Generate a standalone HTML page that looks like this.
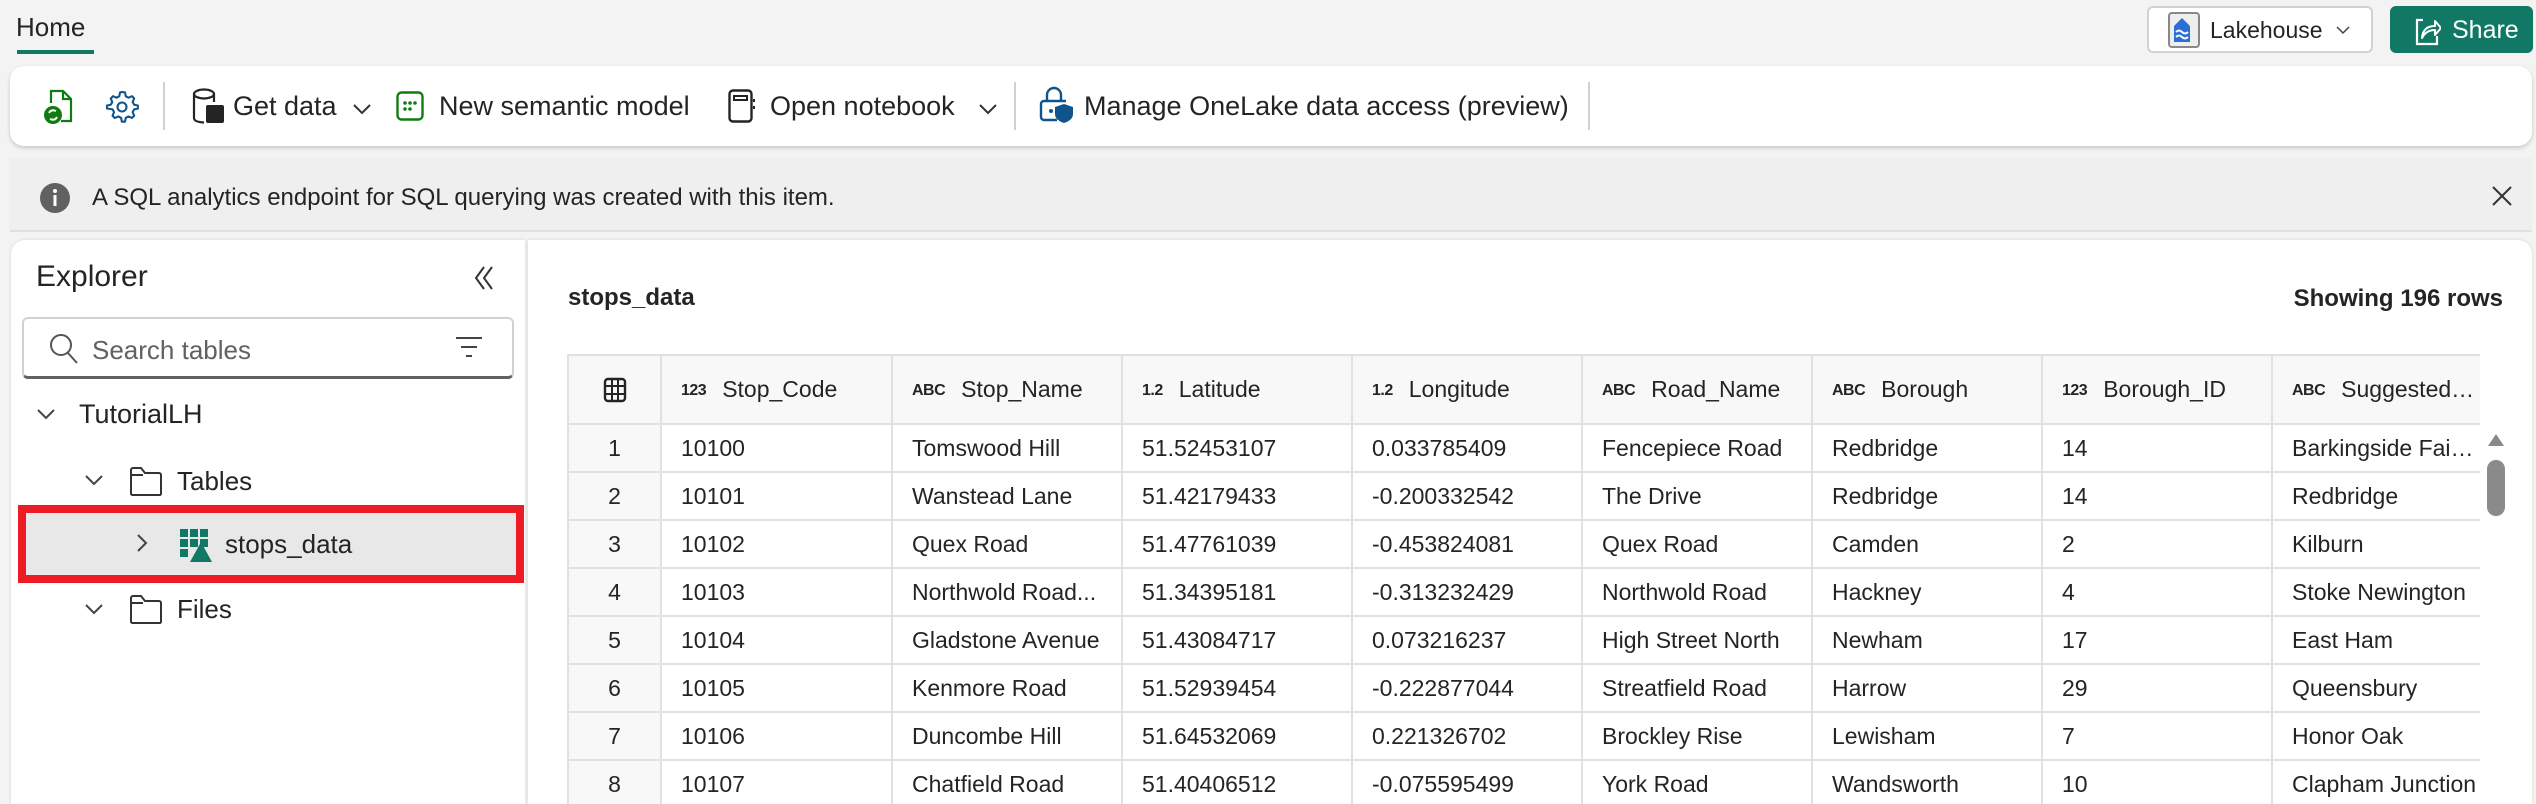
<!DOCTYPE html>
<html><head><meta charset="utf-8">
<style>
*{box-sizing:border-box;margin:0;padding:0}
html,body{width:2536px;height:804px;overflow:hidden}
body{background:#f3f3f3;font-family:"Liberation Sans",sans-serif;color:#242424;position:relative}
.a{position:absolute}
.t{position:absolute;white-space:nowrap;line-height:1}
.clip{position:absolute;left:567px;top:354px;width:1913px;height:450px;overflow:hidden}
table{border-collapse:collapse;table-layout:fixed;width:1913px}
td,th{border:2px solid #e1e1e1;font-size:23px;font-weight:normal;text-align:left;padding:0 0 0 19px;white-space:nowrap;overflow:hidden;text-overflow:ellipsis}
th{height:69px;background:#f8f8f8}
td{height:48px}
td.n,th.n{text-align:center;padding:0;background:#f8f8f8}
.ty{font-size:16px;font-weight:bold;margin-right:16px;letter-spacing:-0.5px;vertical-align:2px}
</style></head><body>
<div class="t" style="left:16px;top:14px;font-size:26px">Home</div>
<div class="a" style="left:17px;top:50px;width:77px;height:4px;background:#117865"></div>
<div class="a" style="left:2147px;top:6px;width:226px;height:47px;background:#fff;border:2px solid #d1d1d1;border-radius:6px"></div>
<svg class="a" style="left:2168px;top:12px" width="32" height="36" viewBox="0 0 32 36"><rect x="1" y="1" width="30" height="34" rx="3" fill="#eee" stroke="#888" stroke-width="2"/><path d="M6 30V14l8-8 8 8v16z" fill="#2b6fd6"/><path d="M8 20q3-3 6 0t6 0M8 25q3-3 6 0t6 0" stroke="#fff" stroke-width="2" fill="none"/></svg>
<div class="t" style="left:2210px;top:19px;font-size:23px">Lakehouse</div>
<svg class="a" style="left:2336px;top:26px" width="14" height="9"><path d="M1 1l6 6 6-6" stroke="#444" stroke-width="1.5" fill="none"/></svg>
<div class="a" style="left:2390px;top:6px;width:143px;height:47px;background:#117865;border-radius:6px"></div>
<svg class="a" style="left:2413px;top:14px" width="28" height="32" viewBox="0 0 28 32"><path d="M10 6H4v24h20v-8" stroke="#fff" stroke-width="2.2" fill="none"/><path d="M9 24q1-12 13-12V7l6 7-6 7v-5q-9 0-13 8z" stroke="#fff" stroke-width="2" fill="none" stroke-linejoin="round"/></svg>
<div class="t" style="left:2452px;top:18px;font-size:25px;color:#fff">Share</div>
<div class="a" style="left:10px;top:66px;width:2522px;height:80px;background:#fff;border-radius:14px;box-shadow:0 2px 4px rgba(0,0,0,.18)"></div>
<svg class="a" style="left:43px;top:89px" width="30" height="36" viewBox="0 0 30 36"><path d="M8 14V2h12l8 8v22H18" stroke="#107c10" stroke-width="2.2" fill="none"/><path d="M20 2v8h8" stroke="#107c10" stroke-width="2.2" fill="none"/><circle cx="10" cy="26" r="9" fill="#107c10"/><path d="M6 24q2-4 7-2M14 28q-2 4-7 2" stroke="#fff" stroke-width="2" fill="none"/></svg>
<svg class="a" style="left:104px;top:89px" width="36" height="36" viewBox="0 0 24 24"><path d="M12 2l2 .3.5 2.5 1.8 1 2.4-1 1.4 1.5-1 2.4 1 1.8 2.5.5v2.1l-2.5.5-1 1.8 1 2.4-1.4 1.5-2.4-1-1.8 1-.5 2.5h-2.1l-.5-2.5-1.8-1-2.4 1-1.5-1.5 1-2.4-1-1.8L2 13V11l2.5-.5 1-1.8-1-2.4L6 4.8l2.4 1 1.8-1L10.7 2.3z" stroke="#0f548c" stroke-width="1.4" fill="none" stroke-linejoin="round"/><circle cx="12" cy="12" r="3" stroke="#0f548c" stroke-width="1.4" fill="none"/></svg>
<div class="a" style="left:163px;top:82px;width:2px;height:48px;background:#d1d1d1"></div>
<svg class="a" style="left:192px;top:88px" width="34" height="36" viewBox="0 0 34 36"><ellipse cx="12" cy="6" rx="10" ry="4.5" stroke="#242424" stroke-width="2.2" fill="none"/><path d="M2 6v24q0 4 10 4.5M22 6v8" stroke="#242424" stroke-width="2.2" fill="none"/><rect x="14" y="17" width="18" height="18" rx="2" fill="#242424"/></svg>
<div class="t" style="left:233px;top:93px;font-size:27px">Get data</div>
<svg class="a" style="left:352px;top:103px" width="20" height="12"><path d="M2 2l8 8 8-8" stroke="#333" stroke-width="2" fill="none"/></svg>
<svg class="a" style="left:396px;top:91px" width="28" height="30"><rect x="1.5" y="1.5" width="25" height="27" rx="4" stroke="#107c10" stroke-width="2.4" fill="none"/><g fill="#107c10"><circle cx="9" cy="12" r="1.8"/><circle cx="14" cy="12" r="1.8"/><circle cx="19" cy="12" r="1.8"/><circle cx="9" cy="18" r="1.8"/><circle cx="14" cy="18" r="1.8"/></g></svg>
<div class="t" style="left:439px;top:93px;font-size:27px">New semantic model</div>
<svg class="a" style="left:728px;top:89px" width="28" height="34"><rect x="1.5" y="1.5" width="22" height="31" rx="3.5" stroke="#242424" stroke-width="2.4" fill="none"/><rect x="6" y="7" width="13" height="4" stroke="#242424" stroke-width="2" fill="none"/><path d="M26 10v3M26 17v3" stroke="#242424" stroke-width="2"/></svg>
<div class="t" style="left:770px;top:93px;font-size:27px">Open notebook</div>
<svg class="a" style="left:978px;top:103px" width="20" height="12"><path d="M2 2l8 8 8-8" stroke="#333" stroke-width="2" fill="none"/></svg>
<div class="a" style="left:1014px;top:82px;width:2px;height:48px;background:#d1d1d1"></div>
<svg class="a" style="left:1039px;top:86px" width="36" height="38" viewBox="0 0 36 38"><path d="M8 15V9a7 7 0 0 1 14 0v6" stroke="#0f548c" stroke-width="2.4" fill="none"/><path d="M18 34H5a3 3 0 0 1-3-3V18a3 3 0 0 1 3-3h22" stroke="#0f548c" stroke-width="2.4" fill="none"/><path d="M25 18l9 3v7q0 6-9 9-9-3-9-9v-7z" fill="#0f548c"/><circle cx="12" cy="25" r="2" fill="#0f548c"/></svg>
<div class="t" style="left:1084px;top:93px;font-size:27px">Manage OneLake data access (preview)</div>
<div class="a" style="left:1588px;top:82px;width:2px;height:48px;background:#d1d1d1"></div>
<div class="a" style="left:10px;top:158px;width:2522px;height:74px;background:#efefef;border-bottom:2px solid #e0e0e0"></div>
<svg class="a" style="left:39px;top:182px" width="32" height="32"><circle cx="16" cy="16" r="15" fill="#616161"/><rect x="14.5" y="13" width="3" height="11" fill="#fff"/><circle cx="16" cy="9" r="2" fill="#fff"/></svg>
<div class="t" style="left:92px;top:186px;font-size:24px">A SQL analytics endpoint for SQL querying was created with this item.</div>
<svg class="a" style="left:2491px;top:185px" width="22" height="22"><path d="M2 2l18 18M20 2L2 20" stroke="#333" stroke-width="2"/></svg>
<div class="a" style="left:11px;top:240px;width:514px;height:564px;background:#fff;border-radius:14px 0 0 0;box-shadow:0 0 3px rgba(0,0,0,.12)"></div>
<div class="t" style="left:36px;top:262px;font-size:30px">Explorer</div>
<svg class="a" style="left:472px;top:265px" width="24" height="26"><path d="M12 2L4 13l8 11M20 2l-8 11 8 11" stroke="#333" stroke-width="2" fill="none"/></svg>
<div class="a" style="left:22px;top:317px;width:492px;height:62px;border:2px solid #d1d1d1;border-bottom:3px solid #616161;border-radius:6px;background:#fff"></div>
<svg class="a" style="left:49px;top:333px" width="30" height="32"><circle cx="12" cy="12" r="10" stroke="#555" stroke-width="2" fill="none"/><path d="M19 20l9 10" stroke="#555" stroke-width="2"/></svg>
<div class="t" style="left:92px;top:337px;font-size:26px;color:#616161">Search tables</div>
<svg class="a" style="left:455px;top:336px" width="28" height="22"><path d="M1 2h26M6 11h16M11 20h6" stroke="#444" stroke-width="2"/></svg>
<svg class="a" style="left:36px;top:408px" width="20" height="12"><path d="M2 2l8 8 8-8" stroke="#444" stroke-width="2" fill="none"/></svg>
<div class="t" style="left:79px;top:401px;font-size:27px">TutorialLH</div>
<svg class="a" style="left:84px;top:474px" width="20" height="12"><path d="M2 2l8 8 8-8" stroke="#444" stroke-width="2" fill="none"/></svg>
<svg class="a" style="left:129px;top:466px" width="34" height="30"><path d="M2 28V4a2 2 0 0 1 2-2h8l4 5h14a2 2 0 0 1 2 2v19a1.5 1.5 0 0 1-2 1H4a2 2 0 0 1-2-1zM2 9h12" stroke="#333" stroke-width="2" fill="none"/></svg>
<div class="t" style="left:177px;top:468px;font-size:26px">Tables</div>
<div class="a" style="left:18px;top:505px;width:506px;height:78px;border:8px solid #ed1c24;background:#e8e8e8"></div>
<svg class="a" style="left:136px;top:533px" width="12" height="20"><path d="M2 2l8 8-8 8" stroke="#444" stroke-width="2" fill="none"/></svg>
<svg class="a" style="left:179px;top:528px" width="34" height="34" viewBox="0 0 34 34"><g fill="#117865"><rect x="1" y="1" width="8" height="8"/><rect x="11" y="1" width="8" height="8"/><rect x="21" y="1" width="8" height="8"/><rect x="1" y="11" width="8" height="8"/><rect x="11" y="11" width="8" height="8"/><rect x="21" y="11" width="8" height="8"/><rect x="1" y="21" width="8" height="8"/><path d="M22 14l11 20H11z"/></g></svg>
<div class="t" style="left:225px;top:531px;font-size:26px">stops_data</div>
<svg class="a" style="left:84px;top:603px" width="20" height="12"><path d="M2 2l8 8 8-8" stroke="#444" stroke-width="2" fill="none"/></svg>
<svg class="a" style="left:129px;top:594px" width="34" height="30"><path d="M2 28V4a2 2 0 0 1 2-2h8l4 5h14a2 2 0 0 1 2 2v19a1.5 1.5 0 0 1-2 1H4a2 2 0 0 1-2-1zM2 9h12" stroke="#333" stroke-width="2" fill="none"/></svg>
<div class="t" style="left:177px;top:596px;font-size:26px">Files</div>
<div class="a" style="left:528px;top:240px;width:2004px;height:564px;background:#fff;border-radius:0 14px 0 0;box-shadow:0 0 3px rgba(0,0,0,.12)"></div>
<div class="t" style="left:568px;top:286px;font-size:24px;font-weight:bold">stops_data</div>
<div class="t" style="left:2275px;top:287px;font-size:24px;font-weight:bold;width:228px;text-align:right">Showing 196 rows</div>
<div class="clip"><table>
<colgroup><col style="width:93px"><col style="width:231px"><col style="width:230px"><col style="width:230px"><col style="width:230px"><col style="width:230px"><col style="width:230px"><col style="width:230px"><col style="width:209px"></colgroup>
<tr><th class="n"><svg width="24" height="26" style="vertical-align:middle"><rect x="2" y="2" width="20" height="22" rx="3" stroke="#242424" stroke-width="2.4" fill="none"/><path d="M2 9h20M2 17h20M9 2v22M15 2v22" stroke="#242424" stroke-width="2"/></svg></th>
<th><span class="ty">123</span>Stop_Code</th><th><span class="ty">ABC</span>Stop_Name</th><th><span class="ty">1.2</span>Latitude</th><th><span class="ty">1.2</span>Longitude</th><th><span class="ty">ABC</span>Road_Name</th><th><span class="ty">ABC</span>Borough</th><th><span class="ty">123</span>Borough_ID</th><th><span class="ty">ABC</span>Suggested_...</th></tr>
<tr><td class="n">1</td><td>10100</td><td>Tomswood Hill</td><td>51.52453107</td><td>0.033785409</td><td>Fencepiece Road</td><td>Redbridge</td><td>14</td><td>Barkingside Fairl...</td></tr>
<tr><td class="n">2</td><td>10101</td><td>Wanstead Lane</td><td>51.42179433</td><td>-0.200332542</td><td>The Drive</td><td>Redbridge</td><td>14</td><td>Redbridge</td></tr>
<tr><td class="n">3</td><td>10102</td><td>Quex Road</td><td>51.47761039</td><td>-0.453824081</td><td>Quex Road</td><td>Camden</td><td>2</td><td>Kilburn</td></tr>
<tr><td class="n">4</td><td>10103</td><td>Northwold Road...</td><td>51.34395181</td><td>-0.313232429</td><td>Northwold Road</td><td>Hackney</td><td>4</td><td>Stoke Newington</td></tr>
<tr><td class="n">5</td><td>10104</td><td>Gladstone Avenue</td><td>51.43084717</td><td>0.073216237</td><td>High Street North</td><td>Newham</td><td>17</td><td>East Ham</td></tr>
<tr><td class="n">6</td><td>10105</td><td>Kenmore Road</td><td>51.52939454</td><td>-0.222877044</td><td>Streatfield Road</td><td>Harrow</td><td>29</td><td>Queensbury</td></tr>
<tr><td class="n">7</td><td>10106</td><td>Duncombe Hill</td><td>51.64532069</td><td>0.221326702</td><td>Brockley Rise</td><td>Lewisham</td><td>7</td><td>Honor Oak</td></tr>
<tr><td class="n">8</td><td>10107</td><td>Chatfield Road</td><td>51.40406512</td><td>-0.075595499</td><td>York Road</td><td>Wandsworth</td><td>10</td><td>Clapham Junction</td></tr>
<tr><td class="n">9</td><td>10108</td><td></td><td></td><td></td><td></td><td></td><td></td><td></td></tr>
</table></div>
<div class="a" style="left:2482px;top:424px;width:24px;height:380px;background:#fff"></div>
<svg class="a" style="left:2487px;top:433px" width="18" height="14"><path d="M9 1l8 12H1z" fill="#8a8a8a"/></svg>
<div class="a" style="left:2487px;top:460px;width:18px;height:56px;background:#8a8a8a;border-radius:9px"></div>
</body></html>
